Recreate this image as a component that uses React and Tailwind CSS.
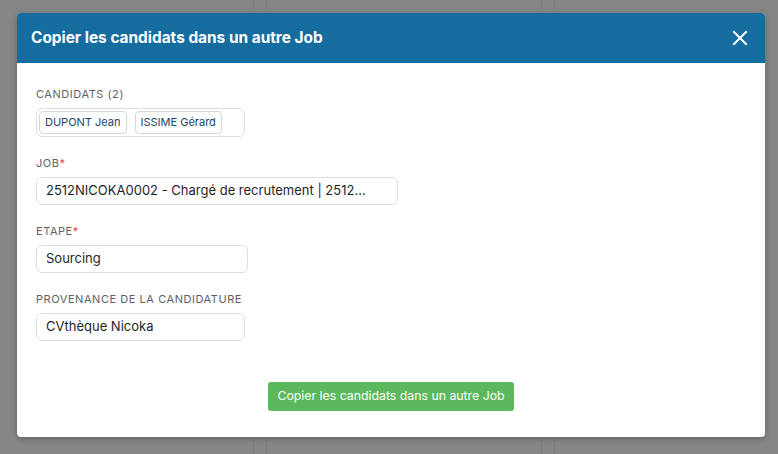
import React from 'react';

// Candidate chips shown in the read-only box
const candidates = ['DUPONT Jean', 'ISSIME Gérard'];

function FieldLabel({ children, required }) {
  return (
    <div className="text-[11px] leading-[14px] tracking-[0.05em] uppercase text-[#5f5f5f] mb-[7px]">
      {children}
      {required && <span className="text-[#e0444f]">*</span>}
    </div>
  );
}

function TextField({ value, width }) {
  return (
    <div
      className={`${width} h-[28px] flex items-center px-[9px] border border-[#dcdfe3] rounded-[6px] text-[13px] text-[#1f1f1f] bg-white`}
    >
      <span className="truncate">{value}</span>
    </div>
  );
}

export default function App() {
  return (
    <div
      className="relative w-[778px] h-[454px] overflow-hidden bg-[#868686]"
      style={{ fontFamily: 'Inter, "Noto Sans", sans-serif' }}
    >
      {/* board columns behind the overlay */}
      <div className="flex h-full">
        <div className="w-[254px] border-r border-[#7c7c86]" />
        <div className="w-[12px]" />
        <div className="w-[276px] border-x border-[#7c7c86]" />
        <div className="w-[12px]" />
        <div className="flex-1 border-l border-[#7c7c86]" />
      </div>

      {/* dialog */}
      <div className="absolute left-[17px] top-[13px] w-[748px] h-[424px] bg-white rounded-[4px] overflow-hidden shadow-[0_2px_6px_rgba(0,0,0,0.25)] flex flex-col">
        <div className="h-[50px] bg-[#156c9f] flex items-center justify-between pl-[14px] pr-[16px]">
          <h2 className="text-[15.4px] font-bold text-white">
            Copier les candidats dans un autre Job
          </h2>
          <svg width="16" height="16" viewBox="0 0 16 16" fill="none" className="mr-[1px]">
            <path d="M2 2L14 14M14 2L2 14" stroke="white" strokeWidth="2" strokeLinecap="square" />
          </svg>
        </div>

        <div className="flex-1 flex flex-col px-[19px] pt-[24px]">
          <FieldLabel>Candidats (2)</FieldLabel>
          <div className="w-[209px] h-[29px] border border-[#dcdfe3] rounded-[6px] flex items-center gap-[8px] px-[2px] mb-[19px]">
            {candidates.map((name) => (
              <div
                key={name}
                className="h-[23px] px-[5px] flex items-center border border-[#d3d7dc] rounded-[4px] text-[11px] text-[#1a4566]"
              >
                {name}
              </div>
            ))}
          </div>

          <FieldLabel required>Job</FieldLabel>
          <div className="mb-[19px]">
            <TextField width="w-[362px]" value="2512NICOKA0002 - Chargé de recrutement | 2512..." />
          </div>

          <FieldLabel required>Etape</FieldLabel>
          <div className="mb-[19px]">
            <TextField width="w-[212px]" value="Sourcing" />
          </div>

          <FieldLabel>Provenance de la candidature</FieldLabel>
          <TextField width="w-[209px]" value="CVthèque Nicoka" />

          <div className="flex justify-center mt-[41px]">
            <button className="h-[29px] px-[9px] rounded-[3px] bg-[#5cb85c] text-white text-[12.3px]">
              Copier les candidats dans un autre Job
            </button>
          </div>
        </div>
      </div>
    </div>
  );
}
